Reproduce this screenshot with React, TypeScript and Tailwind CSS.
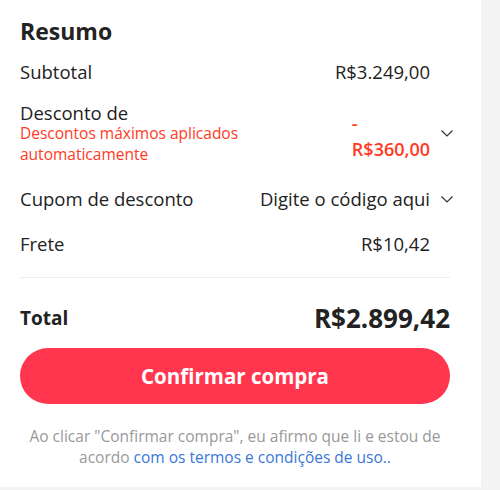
function Chevron({ className = "" }: { className?: string }) {
    return (
        <svg
            width="12"
            height="7"
            viewBox="0 0 12 7"
            fill="none"
            stroke="#333"
            strokeWidth="1.2"
            className={`ml-[11px] -mr-[3px] shrink-0 ${className}`}
        >
            <path d="M0.5 0.5 L6 6 L11.5 0.5" />
        </svg>
    );
}

export default function App() {
    return (
        <main className="w-[500px] h-[490px] bg-[#f4f4f4] font-['Open_Sans',sans-serif] text-[#222]">
            <section className="w-[481px] h-[487px] bg-white pl-5 pr-[31px] pt-[15px]">
                <h2 className="text-[23px] font-bold leading-8">Resumo</h2>

                <div className="mt-[12px] flex items-center justify-between pr-5 text-[18.5px] leading-[26px]">
                    <span>Subtotal</span>
                    <span>R$3.249,00</span>
                </div>

                {/* Desconto */}
                <div className="mt-[17px] flex items-start justify-between">
                    <div>
                        <p className="text-[18.5px] leading-[21px]">Desconto de</p>
                        <p className="w-[250px] text-[15.5px] leading-[21px] text-[#ff3a24]">
                            Descontos máximos aplicados automaticamente
                        </p>
                    </div>
                    <div className="flex items-start">
                        <span className="mt-[8px] text-left text-[18px] font-semibold leading-[26px] text-[#ff3a24]">
                            -<br />R$360,00
                        </span>
                        <Chevron className="mt-[28px]" />
                    </div>
                </div>

                <div className="mt-[21px] flex items-center justify-between text-[18.5px] leading-[26px]">
                    <span>Cupom de desconto</span>
                    <span className="flex items-center">
                        Digite o código aqui
                        <Chevron />
                    </span>
                </div>

                <div className="mt-[19px] flex items-center justify-between pr-5 text-[18.5px] leading-[26px]">
                    <span>Frete</span>
                    <span>R$10,42</span>
                </div>

                <hr className="mt-[20px] border-[#ececec]" />

                <div className="mt-[23px] flex items-center justify-between">
                    <span className="text-[19px] font-bold">Total</span>
                    <span className="text-[26px] font-bold leading-[34px]">R$2.899,42</span>
                </div>

                <button className="mt-[13px] h-[56px] w-full rounded-full bg-[#ff364e] text-[20.5px] font-bold text-white">
                    Confirmar compra
                </button>

                <p className="mt-[22px] text-center text-[15.5px] leading-[21px] text-[#999]">
                    Ao clicar "Confirmar compra", eu afirmo que li e estou de acordo{" "}
                    <a className="text-[#3a78d8]">com os termos e condições de uso..</a>
                </p>
            </section>
        </main>
    );
}
